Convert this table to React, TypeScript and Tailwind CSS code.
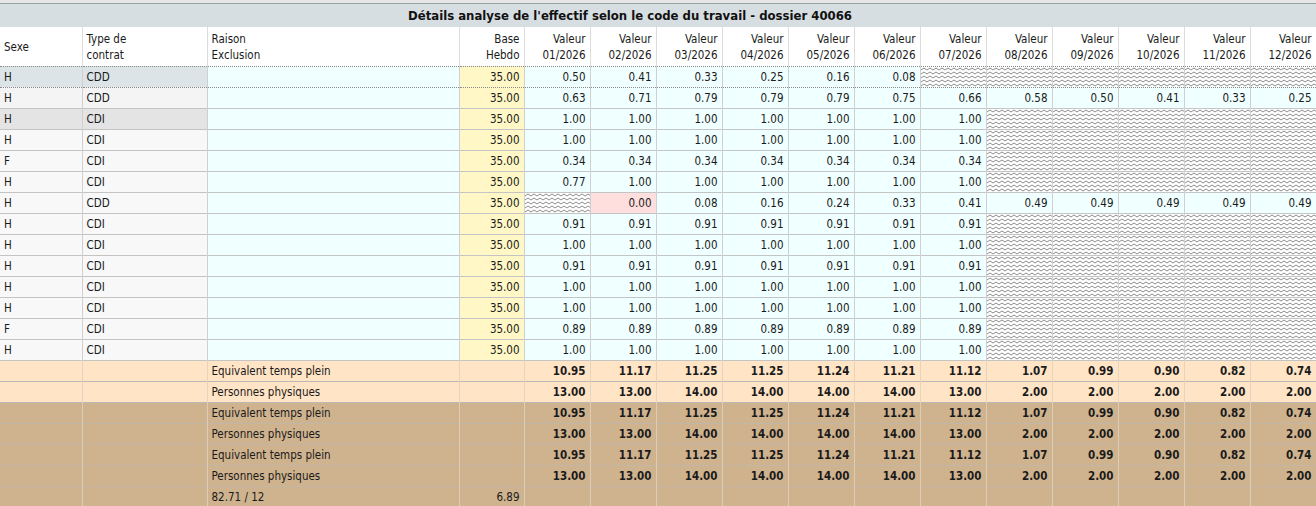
import React from "react";

type Cell = number | null | "pink";

interface Row {
  sexe: string;
  contrat: string;
  values: Cell[];
  sideBg: string;
  dotted?: boolean;
}

const h = null;
const rep = (v: number, n: number) => Array(n).fill(v) as number[];
const hatch = (n: number) => Array(n).fill(h) as Cell[];

const rows: Row[] = [
  { sexe: "H", contrat: "CDD", values: [0.5, 0.41, 0.33, 0.25, 0.16, 0.08, ...hatch(6)], sideBg: "bg-[#dde4e8]", dotted: true },
  { sexe: "H", contrat: "CDD", values: [0.63, 0.71, 0.79, 0.79, 0.79, 0.75, 0.66, 0.58, 0.5, 0.41, 0.33, 0.25], sideBg: "bg-[#f4f4f4]" },
  { sexe: "H", contrat: "CDI", values: [...rep(1, 7), ...hatch(5)], sideBg: "bg-[#e4e4e4]" },
  { sexe: "H", contrat: "CDI", values: [...rep(1, 7), ...hatch(5)], sideBg: "bg-[#f8f8f8]" },
  { sexe: "F", contrat: "CDI", values: [...rep(0.34, 7), ...hatch(5)], sideBg: "bg-[#f8f8f8]" },
  { sexe: "H", contrat: "CDI", values: [0.77, ...rep(1, 6), ...hatch(5)], sideBg: "bg-[#f8f8f8]" },
  { sexe: "H", contrat: "CDD", values: [h, "pink", 0.08, 0.16, 0.24, 0.33, 0.41, ...rep(0.49, 5)], sideBg: "bg-[#f8f8f8]" },
  { sexe: "H", contrat: "CDI", values: [...rep(0.91, 7), ...hatch(5)], sideBg: "bg-[#f8f8f8]" },
  { sexe: "H", contrat: "CDI", values: [...rep(1, 7), ...hatch(5)], sideBg: "bg-[#f8f8f8]" },
  { sexe: "H", contrat: "CDI", values: [...rep(0.91, 7), ...hatch(5)], sideBg: "bg-[#f8f8f8]" },
  { sexe: "H", contrat: "CDI", values: [...rep(1, 7), ...hatch(5)], sideBg: "bg-[#f8f8f8]" },
  { sexe: "H", contrat: "CDI", values: [...rep(1, 7), ...hatch(5)], sideBg: "bg-[#f8f8f8]" },
  { sexe: "F", contrat: "CDI", values: [...rep(0.89, 7), ...hatch(5)], sideBg: "bg-[#f8f8f8]" },
  { sexe: "H", contrat: "CDI", values: [...rep(1, 7), ...hatch(5)], sideBg: "bg-[#f8f8f8]" },
];

const etp = [10.95, 11.17, 11.25, 11.25, 11.24, 11.21, 11.12, 1.07, 0.99, 0.9, 0.82, 0.74];
const pp = [13, 13, 14, 14, 14, 14, 13, 2, 2, 2, 2, 2];

const months = ["01", "02", "03", "04", "05", "06", "07", "08", "09", "10", "11", "12"];

const fmt = (v: number) => v.toFixed(2);

// zigzag fill used for months without contract
const Hatch = ({ id }: { id: string }) => (
  <svg width="100%" height="20" className="block">
    <defs>
      <pattern id={id} width="6" height="4" patternUnits="userSpaceOnUse">
        <path d="M0 3 L3 1 L6 3" fill="none" stroke="#8c8c8c" strokeWidth="1" />
      </pattern>
    </defs>
    <rect width="100%" height="20" fill="#ffffff" />
    <rect width="100%" height="20" fill={`url(#${id})`} />
  </svg>
);

const App: React.FC = () => {
  const font = "font-['DejaVu_Sans_Condensed','DejaVu_Sans',sans-serif]";

  const summary = [
    { label: "Equivalent temps plein", data: etp, bg: "bg-[#ffe4c6]", rowBorder: "border-b-[#b9b9b9]", colBorder: "border-r-[#e3d3bf]" },
    { label: "Personnes physiques", data: pp, bg: "bg-[#ffe4c6]", rowBorder: "border-b-[#b9b9b9]", colBorder: "border-r-[#e3d3bf]" },
    { label: "Equivalent temps plein", data: etp, bg: "bg-[#cfb38f]", rowBorder: "border-b-[#c2b6a6]", colBorder: "border-r-[#dccdb9]" },
    { label: "Personnes physiques", data: pp, bg: "bg-[#cfb38f]", rowBorder: "border-b-[#c2b6a6]", colBorder: "border-r-[#dccdb9]" },
    { label: "Equivalent temps plein", data: etp, bg: "bg-[#cfb38f]", rowBorder: "border-b-[#c2b6a6]", colBorder: "border-r-[#dccdb9]" },
    { label: "Personnes physiques", data: pp, bg: "bg-[#cfb38f]", rowBorder: "border-b-[#c2b6a6]", colBorder: "border-r-[#dccdb9]" },
  ];

  return (
    <div className={`w-[1316px] h-[506px] overflow-hidden bg-white text-[11.5px] text-[#1a1a1a] ${font}`}>
      {/* Title bar */}
      <div className="border-t-[3px] border-t-[#e6e6e6] border-b border-b-[#9aa3a8] h-[4px]" />
      <div className="h-[23px] bg-[#d6dee2] flex items-center justify-center pr-[56px] text-[13px] font-bold text-[#111]">
        Détails analyse de l'effectif selon le code du travail - dossier 40066
      </div>

      <table className="w-[1316px] table-fixed border-collapse">
        <colgroup>
          <col className="w-[82px]" />
          <col className="w-[125px]" />
          <col className="w-[252px]" />
          <col className="w-[65px]" />
          {months.map((m) => (
            <col key={m} className="w-[66px]" />
          ))}
        </colgroup>
        <thead>
          <tr className="h-[39px] bg-white border-b border-dotted border-b-[#8a8a8a]">
            <th className="text-left font-normal px-[4px] pt-[2px] leading-[16px] border-r border-r-[#dcdcdc]">Sexe</th>
            <th className="text-left font-normal px-[4px] pt-[2px] leading-[16px] border-r border-r-[#dcdcdc]">
              Type de
              <br />
              contrat
            </th>
            <th className="text-left font-normal px-[4px] pt-[2px] leading-[16px] border-r border-r-[#dcdcdc]">
              Raison
              <br />
              Exclusion
            </th>
            <th className="text-right font-normal px-[4px] pt-[2px] leading-[16px] border-r border-r-[#dcdcdc]">
              Base
              <br />
              Hebdo
            </th>
            {months.map((m) => (
              <th key={m} className="text-right font-normal px-[4px] pt-[2px] leading-[16px] border-r border-r-[#dcdcdc]">
                Valeur
                <br />
                {m}/2026
              </th>
            ))}
          </tr>
        </thead>
        <tbody>
          {rows.map((r, i) => (
            <tr
              key={i}
              className={`h-[21px] border-b ${r.dotted ? "border-dotted border-b-[#8a8a8a]" : "border-b-[#c4c4c4]"}`}
            >
              <td className={`px-[4px] pt-[2px] border-r border-r-[#d0d0d0] ${r.sideBg}`}>{r.sexe}</td>
              <td className={`px-[4px] pt-[2px] border-r border-r-[#d0d0d0] ${r.sideBg}`}>{r.contrat}</td>
              <td className="px-[4px] border-r border-r-[#d0d0d0] bg-[#f0ffff]" />
              <td className="px-[4px] pt-[2px] text-right border-r border-r-[#d0d0d0] bg-[#fff8c6]">35.00</td>
              {r.values.map((v, j) =>
                v === null ? (
                  <td key={j} className="p-0 border-r border-r-[#d0d0d0]">
                    <Hatch id={`hz-${i}-${j}`} />
                  </td>
                ) : v === "pink" ? (
                  <td key={j} className="px-[4px] pt-[2px] text-right border-r border-r-[#d0d0d0] bg-[#ffdede]">
                    0.00
                  </td>
                ) : (
                  <td key={j} className="px-[4px] pt-[2px] text-right border-r border-r-[#d0d0d0] bg-[#f0ffff]">
                    {fmt(v)}
                  </td>
                )
              )}
            </tr>
          ))}

          {summary.map((s, i) => (
            <tr key={`s${i}`} className={`h-[21px] border-b ${s.rowBorder} ${s.bg}`}>
              <td className={`px-[4px] border-r ${s.colBorder}`} />
              <td className={`px-[4px] border-r ${s.colBorder}`} />
              <td className={`px-[4px] pt-[2px] border-r ${s.colBorder}`}>{s.label}</td>
              <td className={`px-[4px] border-r ${s.colBorder}`} />
              {s.data.map((v, j) => (
                <td key={j} className={`px-[4px] pt-[2px] text-right font-bold border-r ${s.colBorder}`}>
                  {fmt(v)}
                </td>
              ))}
            </tr>
          ))}

          <tr className="h-[21px] bg-[#cfb38f]">
            <td className="px-[4px] border-r border-r-[#dccdb9]" />
            <td className="px-[4px] border-r border-r-[#dccdb9]" />
            <td className="px-[4px] pt-[2px] border-r border-r-[#dccdb9]">82.71 / 12</td>
            <td className="px-[4px] pt-[2px] text-right border-r border-r-[#dccdb9]">6.89</td>
            {months.map((m) => (
              <td key={m} className="px-[4px] border-r border-r-[#dccdb9]" />
            ))}
          </tr>
        </tbody>
      </table>
    </div>
  );
};

export default App;
